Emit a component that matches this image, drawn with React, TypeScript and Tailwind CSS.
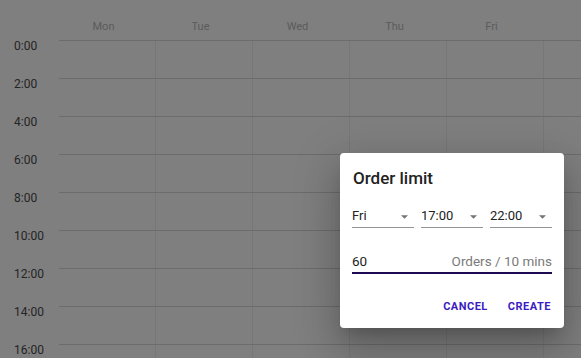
const days = ['Mon', 'Tue', 'Wed', 'Thu', 'Fri']
const cols = ['Mon', 'Tue', 'Wed', 'Thu', 'Fri', 'Sat']
const hours = [0, 2, 4, 6, 8, 10, 12, 14, 16]

function SelectBox({ value }: { value: string }) {
  return (
    <div className="flex h-[22px] w-[62px] items-start justify-between border-b border-[#949494]">
      <span className="text-[13px] leading-[20px] text-[#222]">{value}</span>
      <svg className="mr-[6px] mt-[9px] w-[7px] h-[4px] text-[#757575]" viewBox="0 0 10 5" fill="currentColor">
        <path d="M0 0l5 5 5-5z" />
      </svg>
    </div>
  )
}

export default function App() {
  return (
    <div className="relative w-[581px] h-[358px] overflow-hidden bg-white font-['Roboto','Liberation_Sans',sans-serif]">
      {/* week header */}
      <div className="flex h-[40px]">
        <div className="w-[55px] shrink-0" />
        {days.map((d) => (
          <div key={d} className="w-[97px] shrink-0 pt-[21px] text-center text-[11px] leading-[12px] text-[#b8b8b8]">
            {d}
          </div>
        ))}
      </div>

      {/* grid */}
      {hours.map((h) => (
        <div key={h} className="flex h-[38px]">
          <div className="w-[59px] shrink-0 pl-[14px] text-[12px] leading-[12px] text-[#4a4a4a]">{h}:00</div>
          <div className="flex border-t border-[#d8d8d8]">
            {cols.map((d) => (
              <div key={d} className="w-[97px] shrink-0 border-r border-[#eeeeee]" />
            ))}
          </div>
        </div>
      ))}

      {/* backdrop */}
      <div className="absolute inset-0 bg-black/50" />

      {/* dialog */}
      <div className="absolute left-[340px] top-[153px] w-[224px] h-[175px] rounded-[4px] bg-white px-[12px] pt-[15px] shadow-[0_11px_15px_-7px_rgba(0,0,0,0.2),0_24px_38px_3px_rgba(0,0,0,0.14),0_9px_46px_8px_rgba(0,0,0,0.12)]">
        <div className="pl-[1px] text-[17px] leading-[20px] font-medium text-[#222]">Order limit</div>

        <div className="mt-[18px] flex gap-[7px]">
          <SelectBox value="Fri" />
          <SelectBox value="17:00" />
          <SelectBox value="22:00" />
        </div>

        <div className="mt-[23px] flex h-[23px] items-start justify-between border-b-2 border-[#1c0b52]">
          <span className="text-[13.5px] leading-[20px] text-[#222]">60</span>
          <span className="text-[13.5px] leading-[20px] text-[#7a7a7a]">Orders / 10 mins</span>
        </div>

        <div className="mt-[25px] flex justify-end gap-[20px] pr-[1px]">
          <button className="text-[11px] leading-[16px] font-bold tracking-[0.5px] text-[#3b1cc2]">CANCEL</button>
          <button className="text-[11px] leading-[16px] font-bold tracking-[0.5px] text-[#3b1cc2]">CREATE</button>
        </div>
      </div>
    </div>
  )
}
